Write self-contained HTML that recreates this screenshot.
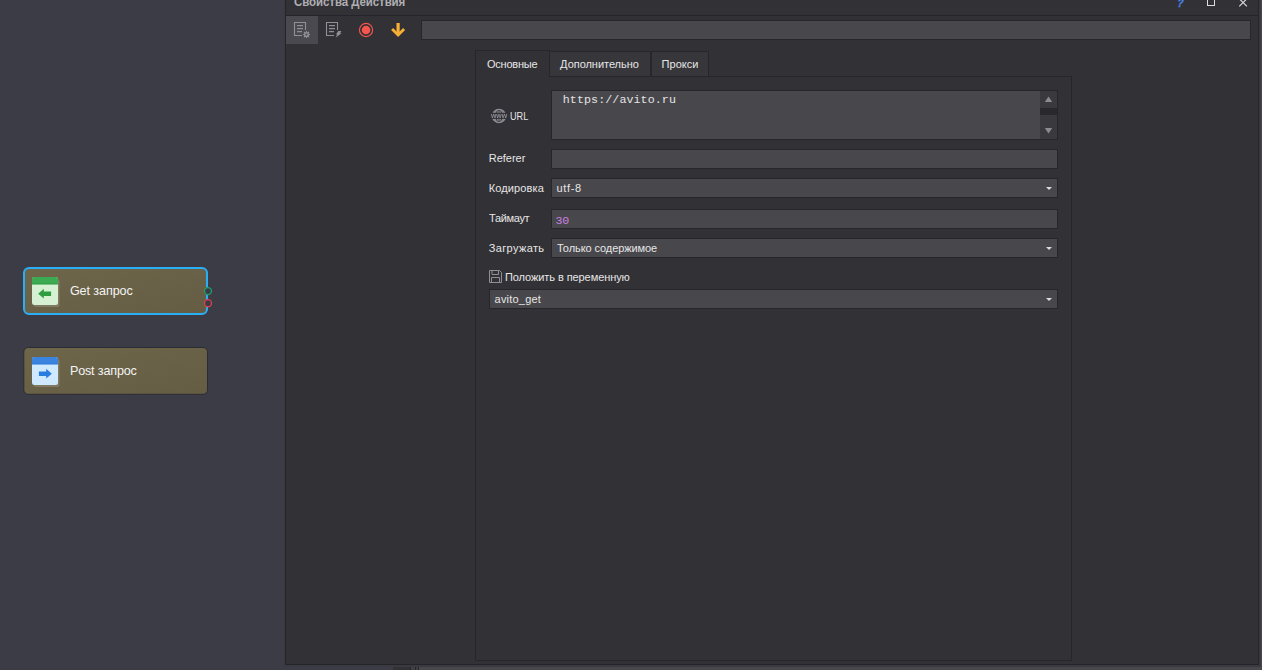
<!DOCTYPE html>
<html><head><meta charset="utf-8"><title>Свойства Действия</title>
<style>
*{box-sizing:border-box;margin:0;padding:0}
html,body{width:1262px;height:670px;overflow:hidden;background:#3c3c47}
body{position:relative;font-family:"Liberation Sans","DejaVu Sans",sans-serif;font-size:11px;color:#e6e6e6}
.a{position:absolute}
.tx{position:absolute;white-space:nowrap;line-height:20px;height:20px}
.inp{position:absolute;background:#48474c;border:1px solid #27262b}
.tab{position:absolute;border:1px solid #27262b;background:#37363b}
.dd{position:absolute;width:0;height:0;border-left:3.5px solid transparent;border-right:3.5px solid transparent;border-top:3.5px solid #dcdcdc}
</style></head><body>
<!-- outer frame -->
<div class="a" style="left:283px;top:0;width:978px;height:667px;background:#3b3a40"></div>
<div class="a" style="left:1261px;top:0;width:1px;height:670px;background:#48474c"></div>
<div class="a" style="left:393px;top:667px;width:17px;height:3px;background:#323136"></div>
<div class="a" style="left:410px;top:667px;width:9px;height:3px;background:linear-gradient(90deg,#26252a 0,#26252a 1px,#403f45 1px,#403f45 5px,#26252a 5px,#26252a 6px,#403f45 6px,#403f45 8px,#26252a 8px,#26252a 9px)"></div>
<div class="a" style="left:419px;top:667px;width:843px;height:3px;background:#48474c"></div>
<!-- panel -->
<div class="a" style="left:285px;top:-1px;width:974px;height:666px;background:#323136;border:1px solid #25242a"></div>
<div class="a" style="left:286px;top:15px;width:972px;height:1px;background:#25242a"></div>

<!-- window buttons -->
<div class="a" id="q" style="left:1174.5px;top:-7px;font-size:12px;font-weight:bold;color:#4d86f0;line-height:20px;transform:skewX(-14deg) scaleX(0.82);transform-origin:0 100%;-webkit-text-stroke:0.3px #4d86f0">?</div>
<div class="a" style="left:1207px;top:-5px;width:8px;height:11px;border:1px solid #dcdcdc"></div>
<svg class="a" style="left:1238px;top:-3.5px" width="10" height="10" viewBox="0 0 10 10"><path d="M1.3 1.7L8.9 9.4M8.9 1.7L1.3 9.4" stroke="#d4d4d4" stroke-width="1.25" fill="none"/></svg>

<!-- toolbar -->
<div class="a" style="left:286px;top:16px;width:32px;height:28px;background:#4a494f"></div>
<svg class="a" style="left:293px;top:21px" width="20" height="18" viewBox="0 0 20 18" fill="none" stroke="#8f8f95">
<path d="M12.5 9V1.5H1.5V14.5H9" stroke-width="1.1"/>
<path d="M4 4.7H10M4 7.7H10M4 10.7H9" stroke-width="1.3"/>
<circle cx="13.5" cy="13.5" r="1.8" stroke-width="1.5"/>
<path d="M13.5 10V11.3M13.5 15.7V17M10 13.5H11.3M15.7 13.5H17M11 11L12 12M15 15L16 16M16 11L15 12M12 15L11 16" stroke-width="1.2"/>
</svg>
<svg class="a" style="left:325px;top:21px" width="20" height="18" viewBox="0 0 20 18" fill="none" stroke="#8f8f95">
<path d="M12.5 9V1.5H1.5V14.5H9" stroke-width="1.1"/>
<path d="M4 4.7H10M4 7.7H10M4 10.7H9" stroke-width="1.3"/>
<path d="M13.2 10H16.5L15 12.3H16.7L10.5 16.8L12.3 13.6H11Z" fill="#8f8f95" stroke="none"/>
</svg>
<svg class="a" style="left:358px;top:22px" width="16" height="16" viewBox="0 0 16 16"><circle cx="8.05" cy="8" r="6.6" fill="none" stroke="#f4564e" stroke-width="1.15"/><circle cx="8.05" cy="8" r="4.3" fill="#f4564e"/></svg>
<svg class="a" style="left:390px;top:22px" width="16" height="16" viewBox="0 0 16 16"><path d="M8.1 1V12" fill="none" stroke="#f7b035" stroke-width="3.2"/><path d="M2.1 7L8.1 13L14.1 7" fill="none" stroke="#f7b035" stroke-width="2.8" stroke-linejoin="miter"/></svg>
<div class="inp" style="left:421px;top:20px;width:830px;height:20px"></div>

<!-- tab pane -->
<div class="a" style="left:475px;top:76px;width:597px;height:585px;border:1px solid #27262b;background:#323136"></div>
<div class="tab" style="left:549px;top:51px;width:102px;height:26px"></div>
<div class="tab" style="left:651px;top:51px;width:58px;height:26px"></div>
<div class="tab" style="left:475px;top:50px;width:75px;height:27px;background:#323136;border-bottom:none"></div>

<!-- URL row -->
<svg class="a" style="left:490px;top:108px;will-change:transform;opacity:.999" width="18" height="16" viewBox="0 0 18 16">
<circle cx="9" cy="8" r="6.9" fill="#85858c"/>
<ellipse cx="9" cy="8" rx="3.1" ry="6" fill="none" stroke="#323136" stroke-width="0.9"/>
<path d="M9 2V14" stroke="#323136" stroke-width="0.7"/>
<circle cx="9" cy="8" r="6.6" fill="none" stroke="#8e8e96" stroke-width="1.2"/>
<rect x="0" y="4.8" width="18" height="6.1" fill="#323136"/>
<text x="9" y="9.9" font-size="7.2" font-family="'Liberation Sans','DejaVu Sans',sans-serif" font-weight="bold" fill="#8e8e96" text-anchor="middle" textLength="16.2" lengthAdjust="spacingAndGlyphs">www</text>
</svg>
<div class="inp" style="left:551px;top:90px;width:507px;height:50px"></div>
<div class="a" style="left:1040px;top:91px;width:17px;height:48px;background:#3a393e"></div>
<div class="a" style="left:1040px;top:108px;width:17px;height:7px;background:#29282d"></div>
<svg class="a" style="left:1044px;top:96px" width="9" height="7" viewBox="0 0 9 7"><path d="M4.5 0.5L8.2 6H0.8Z" fill="#8b8b91"/></svg>
<svg class="a" style="left:1044px;top:127px" width="9" height="7" viewBox="0 0 9 7"><path d="M4.5 6.5L8.2 1H0.8Z" fill="#8b8b91"/></svg>

<!-- Referer -->
<div class="inp" style="left:551px;top:149px;width:507px;height:20px"></div>
<!-- Кодировка -->
<div class="inp" style="left:551px;top:178px;width:507px;height:20px"></div>
<div class="dd" style="left:1045.5px;top:187px"></div>
<!-- Таймаут -->
<div class="inp" style="left:551px;top:209px;width:507px;height:20px"></div>
<!-- Загружать -->
<div class="inp" style="left:551px;top:238px;width:507px;height:20px"></div>
<div class="dd" style="left:1045.5px;top:247px"></div>
<!-- Положить -->
<svg class="a" style="left:489px;top:270px" width="13" height="13" viewBox="0 0 13 13" fill="none" stroke="#8f8f95" stroke-width="1"><path d="M0.5 0.5H10.5L12.5 2.5V12.5H0.5Z"/><path d="M3 0.5V4.5H9.5V0.5M2.5 12.5V7.5H10.5V12.5"/></svg>
<div class="inp" style="left:489px;top:289px;width:569px;height:20px"></div>
<div class="dd" style="left:1045.5px;top:298px"></div>

<!-- nodes -->
<div class="a" style="left:23px;top:267px;width:185px;height:48px;border:2px solid #2aaef5;border-radius:6px;background:linear-gradient(165deg,#6e664a,#645d44)"></div>
<svg class="a" style="left:20px;top:344px" width="192" height="54" viewBox="0 0 192 54"><defs><linearGradient id="ng" x1="0" y1="0" x2="1" y2="1"><stop offset="0" stop-color="#6e664a"/><stop offset="1" stop-color="#645d44"/></linearGradient></defs><rect x="3.8" y="3.5" width="183.7" height="46.8" rx="4.5" fill="url(#ng)" stroke="#2b2b33" stroke-width="1"/></svg>
<svg class="a" style="left:31px;top:276px" width="30" height="32" viewBox="0 0 30 32">
<rect x="2.5" y="3" width="26" height="28" rx="2.5" fill="#8a836c" opacity=".75"/>
<rect x="1" y="1" width="26" height="28" rx="2.5" fill="#d6f0d4"/>
<path d="M1 8.3V3.5A2.5 2.5 0 0 1 3.5 1H24.5A2.5 2.5 0 0 1 27 3.5V8.3Z" fill="#3caa52"/>
<rect x="1" y="7.6" width="26" height="0.8" fill="#2f9a44"/>
<path d="M7.2 17.7L12.8 12.8V15.4H20.1V19.9H12.8V22.6Z" fill="#2f9e41"/>
</svg>
<svg class="a" style="left:31px;top:356px" width="30" height="32" viewBox="0 0 30 32">
<rect x="2.5" y="3" width="26" height="28" rx="2.5" fill="#8a836c" opacity=".75"/>
<rect x="1" y="1" width="26" height="28" rx="2.5" fill="#cfeaff"/>
<path d="M1 8.3V3.5A2.5 2.5 0 0 1 3.5 1H24.5A2.5 2.5 0 0 1 27 3.5V8.3Z" fill="#3a84e0"/>
<rect x="1" y="7.6" width="26" height="0.8" fill="#2f78d4"/>
<path d="M20.8 17.7L15.2 12.8V15.4H7.9V19.9H15.2V22.6Z" fill="#2a7de0"/>
</svg>
<svg class="a" style="left:202px;top:285px" width="12" height="24" viewBox="0 0 12 24">
<circle cx="6" cy="6.1" r="3.5" fill="#3c3c47" stroke="#1fa36c" stroke-width="1.3"/>
<circle cx="6" cy="18.2" r="3.5" fill="#3c3c47" stroke="#e0404a" stroke-width="1.3"/>
</svg>

<div class="tx" id="t_title" style="left:294.00px;top:-8.00px;font-family:'Liberation Sans','DejaVu Sans',sans-serif;font-size:11.5px;font-weight:bold;color:#afafb2;letter-spacing:-0.075px;transform:scaleY(1.13);transform-origin:0 14px">Свойства Действия</div>
<div class="tx" id="t_tab1" style="left:487.00px;top:54.00px;font-family:'Liberation Sans','DejaVu Sans',sans-serif;font-size:11px;font-weight:normal;color:#e6e6e6;letter-spacing:-0.228px">Основные</div>
<div class="tx" id="t_tab2" style="left:560.10px;top:54.00px;font-family:'Liberation Sans','DejaVu Sans',sans-serif;font-size:11px;font-weight:normal;color:#e6e6e6;letter-spacing:-0.033px">Дополнительно</div>
<div class="tx" id="t_tab3" style="left:661.60px;top:54.00px;font-family:'Liberation Sans','DejaVu Sans',sans-serif;font-size:11px;font-weight:normal;color:#e6e6e6;letter-spacing:0.040px">Прокси</div>
<div class="tx" id="t_url" style="left:510.00px;top:106.00px;font-family:'Liberation Sans','DejaVu Sans',sans-serif;font-size:11px;font-weight:normal;color:#e6e6e6;letter-spacing:0.000px;transform:scaleX(0.83);transform-origin:0 0">URL</div>
<div class="tx" id="t_ref" style="left:488.70px;top:148.00px;font-family:'Liberation Sans','DejaVu Sans',sans-serif;font-size:11px;font-weight:normal;color:#e6e6e6;letter-spacing:0.000px">Referer</div>
<div class="tx" id="t_enc" style="left:488.70px;top:178.00px;font-family:'Liberation Sans','DejaVu Sans',sans-serif;font-size:11px;font-weight:normal;color:#e6e6e6;letter-spacing:0.126px">Кодировка</div>
<div class="tx" id="t_utf" style="left:556.50px;top:178.00px;font-family:'Liberation Sans','DejaVu Sans',sans-serif;font-size:11px;font-weight:normal;color:#e6e6e6;letter-spacing:0.650px">utf-8</div>
<div class="tx" id="t_to" style="left:489.00px;top:208.00px;font-family:'Liberation Sans','DejaVu Sans',sans-serif;font-size:11px;font-weight:normal;color:#e6e6e6;letter-spacing:-0.333px">Таймаут</div>
<div class="tx" id="t_30" style="left:555.60px;top:211.00px;font-family:'Liberation Mono','DejaVu Sans Mono',monospace;font-size:11.67px;font-weight:normal;color:#cc82e0;letter-spacing:-0.400px">30</div>
<div class="tx" id="t_load" style="left:488.70px;top:238.00px;font-family:'Liberation Sans','DejaVu Sans',sans-serif;font-size:11px;font-weight:normal;color:#e6e6e6;letter-spacing:0.376px">Загружать</div>
<div class="tx" id="t_only" style="left:557.10px;top:238.00px;font-family:'Liberation Sans','DejaVu Sans',sans-serif;font-size:11px;font-weight:normal;color:#e6e6e6;letter-spacing:-0.087px">Только содержимое</div>
<div class="tx" id="t_put" style="left:505.00px;top:267.00px;font-family:'Liberation Sans','DejaVu Sans',sans-serif;font-size:11px;font-weight:normal;color:#e6e6e6;letter-spacing:-0.080px">Положить в переменную</div>
<div class="tx" id="t_var" style="left:494.60px;top:289.00px;font-family:'Liberation Sans','DejaVu Sans',sans-serif;font-size:11px;font-weight:normal;color:#e6e6e6;letter-spacing:0.199px">avito_get</div>
<div class="tx" id="t_https" style="left:562.80px;top:90.00px;font-family:'Liberation Mono','DejaVu Sans Mono',monospace;font-size:11.67px;font-weight:normal;color:#e4e4e4;letter-spacing:0.080px">https://avito.ru</div>
<div class="tx" id="t_get" style="left:69.90px;top:281.00px;font-family:'Liberation Sans','DejaVu Sans',sans-serif;font-size:12.6px;font-weight:normal;color:#f4f4f4;letter-spacing:-0.089px">Get запрос</div>
<div class="tx" id="t_post" style="left:69.90px;top:361.00px;font-family:'Liberation Sans','DejaVu Sans',sans-serif;font-size:12.6px;font-weight:normal;color:#f4f4f4;letter-spacing:-0.160px">Post запрос</div>
</body></html>
